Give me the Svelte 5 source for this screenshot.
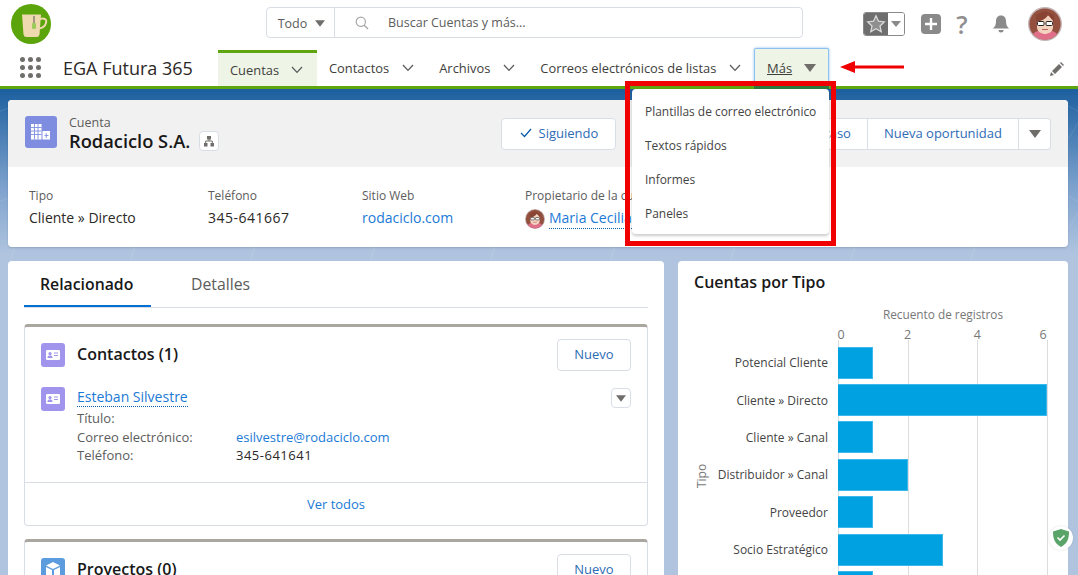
<script>
  const tabs = ['Contactos', 'Archivos', 'Correos electrónicos de listas'];
  const menu = ['Plantillas de correo electrónico', 'Textos rápidos', 'Informes', 'Paneles'];
  const chart = [
    { label: 'Potencial Cliente', n: 1 },
    { label: 'Cliente » Directo', n: 6 },
    { label: 'Cliente » Canal', n: 1 },
    { label: 'Distribuidor » Canal', n: 2 },
    { label: 'Proveedor', n: 1 },
    { label: 'Socio Estratégico', n: 3 },
    { label: 'Otro', n: 1 }
  ];
  const unit = 34.85;
  const ticks = [{ v: 0, nudge: 3 }, { v: 2, nudge: 0 }, { v: 4, nudge: 0 }, { v: 6, nudge: -4 }];
</script>

{#snippet avatar(size)}
  <svg width={size} height={size} viewBox="0 0 34 34" class="avatar">
    <circle cx="17" cy="17" r="17" fill="#c4b4b4" />
    <circle cx="17" cy="17" r="15.6" fill="#94503f" />
    <path d="M5 27c3-3 6-4 12-4s9 1 12 4a15.6 15.6 0 0 1-24 0z" fill="#e0708a" />
    <path d="M9 11c2-3 14-4 16 0v9c0 5-5 7-8 7s-8-2-8-7z" fill="#f3d3c0" />
    <path d="M8 15c5-1 10-3 12-7l6 7V8l-9-4-9 4z" fill="#8a4434" />
    <rect x="9.500" y="14.500" width="6.500" height="4" rx="1" fill="#fff" stroke="#222" stroke-width="1" />
    <rect x="18" y="14.500" width="6.500" height="4" rx="1" fill="#fff" stroke="#222" stroke-width="1" />
    <path d="M14 22.500h6" stroke="#b5645a" stroke-width="1" />
  </svg>
{/snippet}

{#snippet contactIcon()}
  <svg class="obj" width="24" height="24" viewBox="0 0 24 24">
    <rect width="24" height="24" rx="3" fill="#a094ed" />
    <rect x="5" y="7" width="14" height="10" rx="1.200" fill="#fff" />
    <circle cx="9" cy="10.600" r="1.600" fill="#a094ed" />
    <path d="M6.400 15c0-2 1.200-2.400 2.600-2.400s2.600.4 2.600 2.400z" fill="#a094ed" />
    <path d="M13 10h4M13 12.500h4" stroke="#a094ed" stroke-width="1.100" />
  </svg>
{/snippet}

{#snippet caret()}
  <svg width="12" height="8" viewBox="0 0 12 8"><path d="M0 0h12L6 8z" fill="#706e6b" /></svg>
{/snippet}

{#snippet chevron()}
  <svg class="chev" width="12" height="8" viewBox="0 0 12 8"><path d="M1 1l5 5.400L11 1" fill="none" stroke="#5c5c5c" stroke-width="1.300" /></svg>
{/snippet}

<div class="page">
  <header class="top">
    <div class="logo">
      <svg width="40" height="40" viewBox="0 0 40 40">
        <circle cx="20" cy="20" r="20" fill="#5ba40c" />
        <path d="M11 10.500h19l-1.500 20a3 3 0 0 1-3 2.500h-10a3 3 0 0 1-3-2.500z" fill="#efd9ae" />
        <path d="M29 15c5-1.500 7 1 6 4-1 3.500-4 5-7 5.500" fill="none" stroke="#efd9ae" stroke-width="2" />
        <path d="M23 12v7" stroke="#555" stroke-width="1" />
        <rect x="21" y="19" width="4" height="6" rx="1" fill="#9ccb5a" />
      </svg>
    </div>
    <div class="search">
      <div class="scope">Todo <span class="scope-caret">{@render caret()}</span></div>
      <div class="query">
        <svg width="14" height="14" viewBox="0 0 14 14"><circle cx="5.800" cy="5.800" r="4.600" fill="none" stroke="#a8a8a8" stroke-width="1.200" /><path d="M9.200 9.200L13 13" stroke="#a8a8a8" stroke-width="1.400" /></svg>
        <span>Buscar Cuentas y más...</span>
      </div>
    </div>
    <div class="tools">
      <div class="fav">
        <span class="fav-star">
          <svg width="20" height="20" viewBox="0 0 20 20"><path d="M10 1.800l2.500 5.400 5.800.7-4.300 4 1.200 5.800L10 14.800l-5.200 2.900L6 11.900l-4.300-4 5.800-.7z" fill="#8f8f8f" stroke="#d9d9d9" stroke-width="1.300" /></svg>
        </span>
        <span class="fav-more"><svg width="10" height="6" viewBox="0 0 10 6"><path d="M0 0h10L5 6z" fill="#8a8a8a" /></svg></span>
      </div>
      <svg class="plus" width="20" height="20" viewBox="0 0 20 20"><rect width="20" height="20" rx="4" fill="#8a8a8a" /><path d="M10 4v12M4 10h12" stroke="#fff" stroke-width="2.400" /></svg>
      <span class="help">?</span>
      <svg class="bell" width="20" height="20" viewBox="0 0 20 20"><path d="M10 1.500c-3.500 0-5 2.500-5 5.500 0 4-1 5.500-3 7.500h16c-2-2-3-3.500-3-7.500 0-3-1.500-5.500-5-5.500z" fill="#8a8a8a" /><path d="M7.500 16a2.500 2.500 0 0 0 5 0z" fill="#8a8a8a" /></svg>
      {@render avatar(34)}
    </div>
  </header>

  <nav class="nav">
    <div class="waffle">
      {#each Array(9) as _}<i></i>{/each}
    </div>
    <div class="app">EGA Futura 365</div>
    <div class="tab active">Cuentas {@render chevron()}</div>
    {#each tabs as t}
      <div class="tab">{t} {@render chevron()}</div>
    {/each}
    <div class="more"><u>Más</u> {@render caret()}</div>
    <svg class="arrow" width="64" height="14" viewBox="0 0 64 14"><path d="M0 7l15-6v4.500h49v3H15V13z" fill="#f00000" /></svg>
    <svg class="pencil" width="14" height="14" viewBox="0 0 14 14"><path d="M0 14l1-4 3 3zM2 9l7-7 3 3-7 7zM10 1l1-1 3 3-1 1z" fill="#706e6b" /></svg>
  </nav>

  <main class="content">
    <svg class="topo" width="1078" height="180" viewBox="0 0 1078 180">
      <defs>
        <pattern id="topo" width="120" height="90" patternUnits="userSpaceOnUse">
          <path d="M-10 30c30-30 60 10 90-10s40 20 60 0M10 90c0-40 40-50 60-30s40-10 50-30M30 30c20-10 30 0 30 10s-20 20-30 10-10-15 0-20" fill="none" stroke="#fff" stroke-opacity=".1" />
        </pattern>
      </defs>
      <rect width="1078" height="180" fill="url(#topo)" />
    </svg>

    <section class="highlights">
      <div class="hl-head">
        <svg class="acct" width="32" height="32" viewBox="0 0 32 32">
          <rect width="32" height="32" rx="3" fill="#7f8de1" />
          <rect x="6" y="8" width="10.500" height="15.500" fill="#fff" />
          <rect x="17.500" y="15" width="7.500" height="8.500" fill="#fff" />
          <path d="M9.500 8v15.500M13 8v15.500M6 11.500h10.500M6 15h10.500M6 18.500h10.500M21.200 17v5M19.500 19.500h4" stroke="#7f8de1" stroke-width=".9" />
        </svg>
        <div class="hl-title">
          <div class="eyebrow">Cuenta</div>
          <div class="name-row">
            <span class="name">Rodaciclo S.A.</span>
            <span class="hier">
              <svg width="12" height="12" viewBox="0 0 12 12"><path d="M4 1h4v3.500H4zM1 8h3.500v3.500H1zM7.500 8H11v3.500H7.500z" fill="#706e6b" /><path d="M6 4v2M2.700 8V6h6.600v2" fill="none" stroke="#706e6b" /></svg>
            </span>
          </div>
        </div>
        <div class="actions">
          <button class="btn follow">
            <svg width="12" height="10" viewBox="0 0 12 10"><path d="M1 5l3.500 3.500L11 1" fill="none" stroke="#0b5cab" stroke-width="1.300" /></svg>
            Siguiendo
          </button>
          <div class="btn-group">
            <button class="btn">Nuevo contacto</button>
            <button class="btn">Nuevo caso</button>
            <button class="btn">Nueva oportunidad</button>
            <button class="btn icon-only">{@render caret()}</button>
          </div>
        </div>
      </div>
      <div class="fields">
        <div class="field f1"><div class="lbl">Tipo</div><div class="val">Cliente » Directo</div></div>
        <div class="field f2"><div class="lbl">Teléfono</div><div class="val num">345-641667</div></div>
        <div class="field f3"><div class="lbl">Sitio Web</div><div class="val link">rodaciclo.com</div></div>
        <div class="field"><div class="lbl">Propietario de la cuenta</div>
          <div class="val owner">{@render avatar(20)} <span class="link dotted">Maria Cecilia</span></div>
        </div>
      </div>
    </section>

    <div class="columns">
      <section class="card left">
        <div class="tabset">
          <div class="t on">Relacionado</div>
          <div class="t">Detalles</div>
        </div>

        <div class="rel">
          <div class="rel-head">
            {@render contactIcon()}
            <h2>Contactos (1)</h2>
            <button class="btn small">Nuevo</button>
          </div>
          <div class="rel-row">
            {@render contactIcon()}
            <div class="rel-info">
              <div class="person"><span class="link dotted">Esteban Silvestre</span></div>
              <div class="kv"><span>Título:</span></div>
              <div class="kv"><span>Correo electrónico:</span><b class="link">esilvestre@rodaciclo.com</b></div>
              <div class="kv"><span>Teléfono:</span><b class="num">345-641641</b></div>
            </div>
            <span class="mini">{@render caret()}</span>
          </div>
          <div class="rel-foot link">Ver todos</div>
        </div>

        <div class="rel">
          <div class="rel-head">
            <svg class="obj" width="24" height="24" viewBox="0 0 24 24">
              <rect width="24" height="24" rx="3" fill="#5a9cdd" />
              <path d="M12 4l7 3.500-7 3.500-7-3.500zM5 9l6 3v8l-6-3zM19 9l-6 3v8l6-3z" fill="#fff" />
            </svg>
            <h2>Proyectos (0)</h2>
            <button class="btn small">Nuevo</button>
          </div>
        </div>
      </section>

      <section class="card right">
        <h2>Cuentas por Tipo</h2>
        <div class="axis-title">Recuento de registros</div>
        <div class="ticks">
          {#each ticks as t}<span style="left:{t.v * unit + t.nudge}px">{t.v}</span>{/each}
        </div>
        <div class="plot">
          <div class="ytitle">Tipo</div>
          {#each ticks as t}<i class="grid" style="left:{144 + t.v * unit}px"></i>{/each}
          {#each chart as c}
            <div class="row">
              <span class="rlabel">{c.label}</span>
              <span class="bar" style="width:{c.n * unit}px"></span>
            </div>
          {/each}
        </div>
      </section>
    </div>
  </main>

  <div class="dropdown">
    {#each menu as m}<div class="item">{m}</div>{/each}
  </div>
  <div class="redbox"></div>

  <div class="shield">
    <svg width="16" height="18" viewBox="0 0 16 18"><path d="M8 0l8 2.500c0 7-1.500 12-8 15.500C1.500 14.500 0 9.500 0 2.500z" fill="#5aa469" /><path d="M4.500 8.500l2.500 2.500 4.500-4.500" fill="none" stroke="#fff" stroke-width="1.600" /></svg>
  </div>
</div>

<style>
  :global(body) { margin: 0; background: #fff; }
  .page { position: relative; width: 1078px; height: 575px; overflow: hidden; font-family: "Open Sans", "Liberation Sans", sans-serif; font-size: 13px; color: #16325c; }

  .top { height: 50px; display: flex; align-items: center; background: #fff; box-sizing: border-box; padding: 0 16px 2px 11px; }
  .logo { width: 40px; height: 40px; }
  .search { display: flex; width: 537px; height: 31px; margin-left: 215px; margin-top: -3px; border: 1px solid #d8dde6; border-radius: 4px; box-sizing: border-box; color: #5c5c5c; font-size: 12.500px; }
  .scope { width: 68px; display: flex; align-items: center; justify-content: center; gap: 8px; border-right: 1px solid #d8dde6; padding: 1px 0 0 2px; box-sizing: border-box; }
  .scope-caret { display: flex; }
  .scope-caret :global(svg) { width: 10px; height: 7px; }
  .query { display: flex; align-items: center; padding-left: 20px; gap: 19px; }
  .tools { display: flex; align-items: center; margin-left: 60px; }
  .fav { display: flex; width: 42px; height: 24px; border-radius: 3px; overflow: hidden; border: 1px solid #8a8a8a; box-sizing: border-box; }
  .fav-star { width: 24px; background: #6e6e6e; display: flex; align-items: center; justify-content: center; }
  .fav-more { flex: 1; display: flex; align-items: center; justify-content: center; background: #fff; }
  .plus { margin-left: 16px; }
  .help { width: 42px; text-align: center; font-size: 25px; font-weight: 600; line-height: 24px; color: #8f8f8f; }
  .bell { margin-left: 8px; }
  .avatar { display: block; flex: none; }
  .tools .avatar { margin-left: 17px; }

  .nav { position: relative; height: 39px; box-sizing: border-box; display: flex; align-items: stretch; background: #fff; border-bottom: 3px solid #5fa50f; padding-left: 20px; color: #3e3e3c; }
  .waffle { width: 21px; height: 21px; margin-top: 7px; display: grid; grid-template-columns: repeat(3, 5px); gap: 3px; }
  .waffle i { width: 5px; height: 5px; border-radius: 50%; background: #706e6b; }
  .app { margin-left: 22px; width: 155px; font-size: 18px; line-height: 36px; color: #2b2826; }
  .tab { display: flex; align-items: center; gap: 13px; padding: 0 0 0 12px; margin-right: 13px; font-size: 12.900px; white-space: nowrap; }
  .tab.active { background: #eef4e6; border-top: 3px solid #5fa50f; box-sizing: border-box; width: 99px; margin-right: 0; height: 36px; gap: 12px; }
  .tab :global(.chev) { flex: none; }
  .more { position: absolute; left: 754px; top: -2px; width: 75px; height: 38px; box-sizing: border-box; padding: 0 12px; display: flex; align-items: center; justify-content: space-between; background: #eef4e6; border: 1px solid #8dc1f0; border-bottom: 0; box-shadow: 0 0 3px #8dc1f0; font-size: 13px; border-radius: 2px 2px 0 0; }
  .more::after { content: ""; position: absolute; left: -1px; right: -1px; bottom: -3px; height: 3px; background: #2c7a3c; }
  .arrow { position: absolute; left: 840px; top: 10px; }
  .pencil { position: absolute; left: 1050px; top: 12px; }

  .content { position: relative; height: 486px; box-sizing: border-box; padding: 11px 10px 0 8px; background: linear-gradient(#1c5f9f 0, #7fa3ce 100px, #b0c4df 165px); }
  .topo { position: absolute; left: 0; top: 0; }

  .highlights { position: relative; height: 147px; background: #fff; border-radius: 4px; overflow: hidden; box-shadow: 0 1px 2px rgba(0,0,0,.15); }
  .hl-head { height: 67px; background: #f1f1f1; display: flex; align-items: flex-start; padding: 16px 17px 0; box-sizing: border-box; }
  .acct { flex: none; }
  .hl-title { margin-left: 12px; margin-top: -1px; }
  .eyebrow { font-size: 12.500px; color: #5c5c5c; line-height: 16px; }
  .name-row { display: flex; align-items: center; gap: 9px; margin-top: -2px; }
  .name { font-size: 18.300px; font-weight: 600; line-height: 24px; color: #181818; }
  .hier { width: 20px; height: 20px; background: #fff; border: 1px solid #d8dde6; border-radius: 4px; box-sizing: border-box; display: flex; align-items: center; justify-content: center; }
  .actions { margin-left: auto; display: flex; margin-top: 2px; }
  .btn { height: 32px; box-sizing: border-box; background: #fff; border: 1px solid #d8dde6; border-radius: 4px; color: #2e6cb5; font: inherit; font-size: 13px; padding: 0 16px 2px; white-space: nowrap; }
  .follow { width: 115px; display: flex; align-items: center; justify-content: center; gap: 7px; margin-right: 19px; }
  .btn-group { display: flex; }
  .btn-group .btn { border-radius: 0; border-left-width: 0; }
  .btn-group .btn:first-child { border-left-width: 1px; border-radius: 4px 0 0 4px; }
  .btn-group .btn:last-child { border-radius: 0 4px 4px 0; }
  .icon-only { width: 32px; padding: 0; display: flex; align-items: center; justify-content: center; }

  .fields { display: flex; padding: 21px 0 0 21px; }
  .f1 { width: 179px; }
  .f2 { width: 154px; }
  .f3 { width: 163px; }
  .lbl { font-size: 12px; color: #5c5c5c; line-height: 16px; }
  .val { font-size: 14px; line-height: 20px; margin-top: 4px; color: #2b2826; }
  .num { letter-spacing: .5px; }
  .link { color: #1a7ad6; }
  .val.link { color: #1a7ad6; }
  .dotted { border-bottom: 1px dotted #0b5cab; }
  .owner { display: flex; align-items: center; gap: 4px; }

  .columns { display: flex; gap: 14px; margin-top: 14px; align-items: stretch; }
  .card { background: #fff; border-radius: 4px; height: 400px; position: relative; }
  .left { width: 656px; box-sizing: border-box; padding: 0 16px; }
  .right { width: 390px; box-sizing: border-box; padding: 0 16px; }
  h2 { margin: 0; font-size: 16px; font-weight: 600; color: #181818; }

  .tabset { display: flex; height: 46px; border-bottom: 1px solid #d8dde6; font-size: 15.800px; color: #5c5c5c; }
  .t { box-sizing: border-box; padding: 12px 0 0 16px; }
  .t.on { width: 127px; margin-right: 24px; color: #181818; font-weight: 600; border-bottom: 2px solid #0070d2; height: 46px; }

  .rel { border: 1px solid #d8dde6; border-top: 3px solid #aaa6a0; border-radius: 4px; margin-top: 16px; height: 202px; box-sizing: border-box; }
  .rel + .rel { margin-top: 13px; }
  .rel-head { display: flex; align-items: center; height: 32px; padding: 12px 16px 0; }
  .rel-head h2 { margin-left: 12px; margin-top: -3px; }
  .obj { flex: none; }
  .small { margin-left: auto; width: 74px; padding: 0 0 2px; }
  .rel-row { display: flex; align-items: flex-start; padding: 16px 16px 0; height: 111px; box-sizing: border-box; }
  .rel-info { margin-left: 12px; flex: 1; font-size: 13px; color: #5c5c5c; line-height: 18.500px; }
  .person { font-size: 14px; line-height: 21px; margin: -1px 0 2px; }
  .kv { display: flex; }
  .kv span { width: 159px; }
  .kv b { font-weight: 400; }
  .kv b:not(.link) { color: #2b2826; }
  .mini { width: 20px; height: 20px; margin-top: 1px; border: 1px solid #d8dde6; border-radius: 4px; box-sizing: border-box; display: flex; align-items: center; justify-content: center; }
  .mini :global(svg) { width: 10px; height: 7px; }
  .rel-foot { border-top: 1px solid #d8dde6; height: 43px; text-align: center; line-height: 43px; font-size: 13px; }

  .right h2 { padding-top: 11px; line-height: 20px; }
  .axis-title { margin-top: 14px; width: 226px; margin-left: 136px; font-size: 11.800px; text-align: center; color: #777; line-height: 16px; }
  .ticks { position: relative; height: 16px; margin-top: 4px; margin-left: 144px; font-size: 12.500px; color: #777; }
  .ticks span { position: absolute; top: 0; transform: translateX(-50%); }
  .plot { position: relative; margin-top: 2px; }
  .grid { position: absolute; top: -4px; bottom: 0; width: 1px; background: #dcdcdc; }
  .ytitle { position: absolute; left: -4px; top: 124px; font-size: 12px; color: #777; transform: rotate(-90deg); line-height: 16px; }
  .row { position: relative; display: flex; align-items: center; height: 37.400px; }
  .rlabel { width: 134px; margin-right: 10px; text-align: right; font-size: 12px; color: #444; white-space: nowrap; flex: none; }
  .bar { height: 32px; box-sizing: border-box; background: #00a1e0; border: 1px solid #3cb8ec; border-left: 0; }

  .dropdown { position: absolute; left: 632px; top: 89px; width: 197px; height: 145px; box-sizing: border-box; padding: 6px 0 0; background: #fff; border-radius: 4px; box-shadow: 0 2px 3px rgba(0,0,0,.2); color: #444; font-size: 11.950px; }
  .item { height: 34px; line-height: 34px; padding-left: 13px; white-space: nowrap; }
  .redbox { position: absolute; left: 625px; top: 81px; width: 211px; height: 165px; box-sizing: border-box; border: 5px solid #f00000; pointer-events: none; }
  .shield { position: absolute; left: 1049px; top: 526px; width: 24px; height: 24px; border-radius: 50%; background: #fff; display: flex; align-items: center; justify-content: center; box-shadow: 0 0 2px rgba(0,0,0,.15); }
</style>
